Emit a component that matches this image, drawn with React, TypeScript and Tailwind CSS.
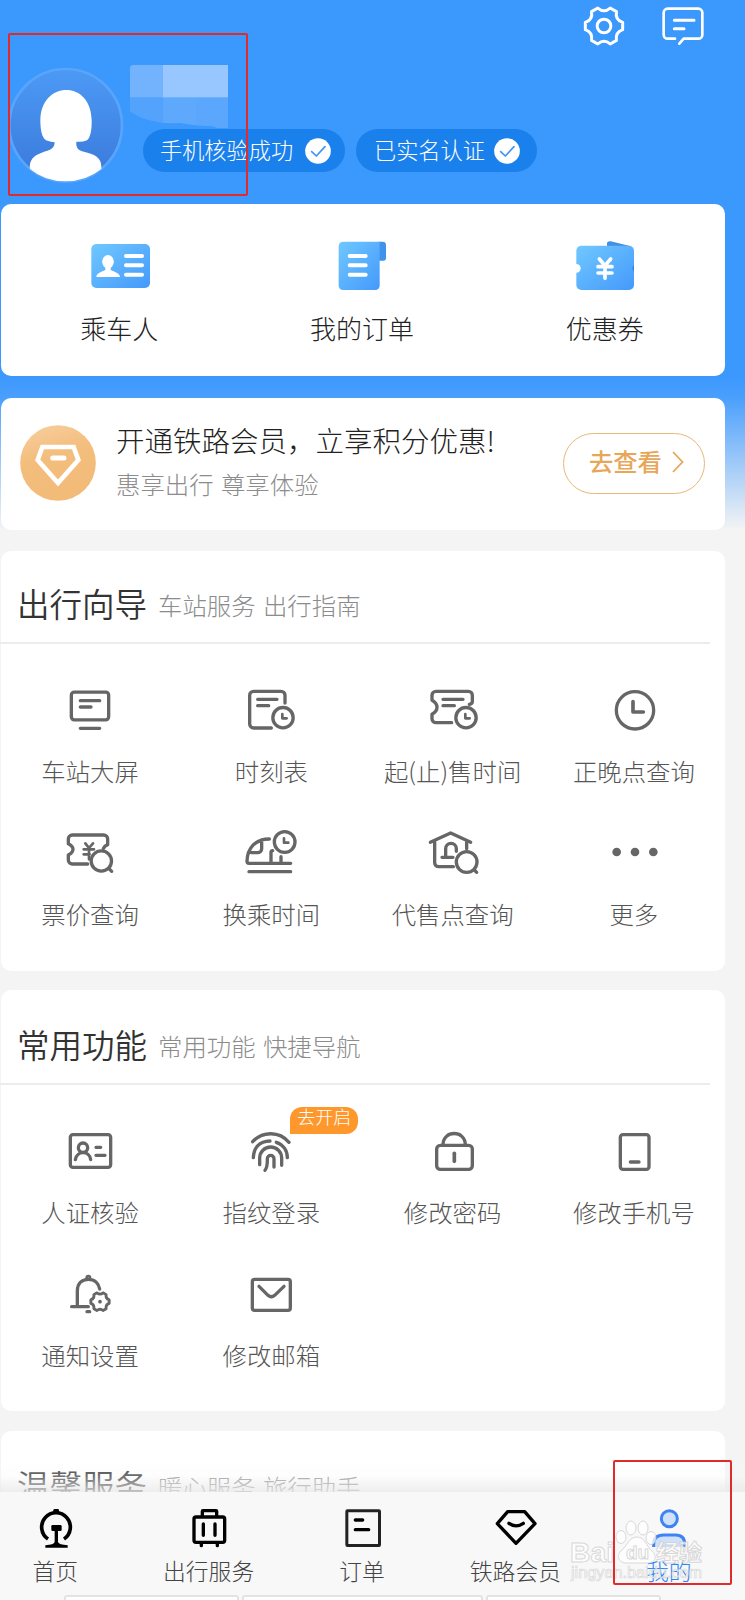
import type { ReactNode } from 'react';

interface MenuItem {
  label: string;
  icon: ReactNode;
  badge?: string;
}

// Six-lobed cog outline, rounded between the lobes
function cogPath(cx: number, cy: number, r: number, dip: number) {
  const at = (deg: number, radius: number) => {
    const a = (deg * Math.PI) / 180;
    return `${(cx + Math.cos(a) * radius).toFixed(1)} ${(cy + Math.sin(a) * radius).toFixed(1)}`;
  };
  let d = '';
  for (let i = 0; i < 6; i++) {
    const deg = i * 60;
    d += `${i === 0 ? 'M' : 'L'}${at(deg - 11, r)}L${at(deg + 11, r)}Q${at(deg + 30, dip)} ${at(deg + 49, r)}`;
  }
  return d + 'Z';
}

function LineIcon({ children }: { children: ReactNode }) {
  return (
    <svg
      className="w-[60px] h-12"
      viewBox="0 0 180 144"
      fill="none"
      stroke="#666"
      strokeWidth="10"
      strokeLinecap="round"
      strokeLinejoin="round"
    >
      {children}
    </svg>
  );
}

const guideItems: MenuItem[] = [
  {
    label: '车站大屏',
    icon: (
      <LineIcon>
        <rect x="31" y="21.5" width="112" height="83" rx="9" />
        <path d="M58 47H116M58 66H90M58 130H116" />
      </LineIcon>
    ),
  },
  {
    label: '时刻表',
    icon: (
      <LineIcon>
        <path d="M129 54V31a12 12 0 0 0-12-12H35a12 12 0 0 0-12 12v86a12 12 0 0 0 12 12h53" />
        <path d="M47 43H105M47 62H80" />
        <circle cx="123" cy="98" r="30.5" />
        <path d="M121 87V100H134" strokeWidth="8" />
      </LineIcon>
    ),
  },
  {
    label: '起(止)售时间',
    icon: (
      <LineIcon>
        <path d="M139 58Q148 56 148 50V31a12 12 0 0 0-12-12H39a12 12 0 0 0-12 12V46Q42 54 42 67Q42 80 27 88V101a12 12 0 0 0 12 12H86" />
        <path d="M60 43H120M60 62H94" />
        <circle cx="129" cy="98" r="30.5" />
        <path d="M127 87V100H140" strokeWidth="8" />
      </LineIcon>
    ),
  },
  {
    label: '正晚点查询',
    icon: (
      <LineIcon>
        <circle cx="93" cy="76" r="56" />
        <path d="M87 50V81H118" strokeWidth="11" />
      </LineIcon>
    ),
  },
  {
    label: '票价查询',
    icon: (
      <LineIcon>
        <path d="M127 62Q130 54 140 50V33a12 12 0 0 0-12-12H34a12 12 0 0 0-12 12V47Q36 54 36 64Q36 74 22 81V96a12 12 0 0 0 12 12H80" />
        <path d="M73 46L84 60L96 46M68 64H99M68 79H86M84 60V94" strokeWidth="8" />
        <circle cx="121" cy="99" r="30.5" />
        <path d="M144 122L152 130" />
      </LineIcon>
    ),
  },
  {
    label: '换乘时间',
    icon: (
      <LineIcon>
        <path d="M82 33C40 33 16 60 15 100Q15 106 21 106H146M59 36V62a12 12 0 0 1-12 12H28M87 106V74q0-6 5-6M117 106V86M21 131H146" />
        <circle cx="128" cy="42" r="31" />
        <path d="M126 31V44H139" strokeWidth="8" />
      </LineIcon>
    ),
  },
  {
    label: '代售点查询',
    icon: (
      <LineIcon>
        <path d="M22 43L83 15L143 43M35 42V104a12 12 0 0 0 12 12H91M131 42V62" />
        <path d="M68 88V62a16 16 0 0 1 32 0V70M57 88H90" />
        <circle cx="131" cy="102" r="31" />
        <path d="M154 126L161 133" />
      </LineIcon>
    ),
  },
  {
    label: '更多',
    icon: (
      <LineIcon>
        <g fill="#666" stroke="none">
          <circle cx="38" cy="72" r="13" />
          <circle cx="93" cy="72" r="13" />
          <circle cx="148" cy="72" r="13" />
        </g>
      </LineIcon>
    ),
  },
];

const commonItems: MenuItem[] = [
  {
    label: '人证核验',
    icon: (
      <LineIcon>
        <rect x="28" y="26" width="121" height="98" rx="8" />
        <circle cx="66" cy="65" r="14" />
        <path d="M43 101C47 73 86 73 89 101M105 64H119M105 88H132" />
      </LineIcon>
    ),
  },
  {
    label: '指纹登录',
    badge: '去开启',
    icon: (
      <LineIcon>
        <path d="M32 47C62 15 112 15 141 49M34 95C35 65 52 46 84 45M103 49C124 56 136 74 136 95" />
        <path d="M53 116V96a33 33 0 0 1 66 0V118M69 133C77 123 76 110 76 98a10 10 0 0 1 20 0V123" />
      </LineIcon>
    ),
  },
  {
    label: '修改密码',
    icon: (
      <LineIcon>
        <rect x="41" y="58" width="107" height="72" rx="11" />
        <path d="M60 57C60 11 127 11 127 57" />
        <path d="M94 82V106" strokeWidth="11" />
      </LineIcon>
    ),
  },
  {
    label: '修改手机号',
    icon: (
      <LineIcon>
        <rect x="49" y="26" width="86" height="104" rx="8" />
        <path d="M79 108H105" />
      </LineIcon>
    ),
  },
  {
    label: '通知设置',
    icon: (
      <LineIcon>
        <path d="M49 110V66C49 44 62 31 82 31C102 31 113 44 116 60M32 113H82M78 128H86" />
        <circle cx="82" cy="26" r="4" />
        <path d={cogPath(117, 98, 28, 19)} strokeWidth="8.5" />
        <circle cx="117" cy="98" r="5.5" fill="#666" stroke="none" />
      </LineIcon>
    ),
  },
  {
    label: '修改邮箱',
    icon: (
      <LineIcon>
        <rect x="31" y="31" width="114" height="93" rx="7" />
        <path d="M51 52L78 79Q88 88 98 79L126 52" />
      </LineIcon>
    ),
  },
];

const tabs = [
  {
    label: '首页',
    icon: (
      <>
        <path d="M66 99A43 43 0 1 1 114 99" strokeWidth="11" strokeLinecap="butt" />
        <path d="M82 20V13Q82 9 86 9H95Q99 9 99 13V20Z" fill="#000" stroke="none" />
        <rect x="76" y="57" width="31" height="18" rx="4" fill="#000" stroke="none" />
        <path d="M86 74H96V108Q99 116 125 118V125H58V118Q84 116 86 108Z" fill="#000" stroke="none" />
      </>
    ),
  },
  {
    label: '出行服务',
    icon: (
      <>
        <path d="M70 29V16Q70 14 72 14H111Q113 14 113 16V29" />
        <rect x="45" y="33" width="92" height="76" rx="6" />
        <path d="M73 54V88M108 54V88M67 112V119M115 112V119" />
      </>
    ),
  },
  {
    label: '订单',
    icon: (
      <g stroke="#222">
        <rect x="44.5" y="14.5" width="98" height="104" rx="2" strokeWidth="9" />
        <path d="M70 42H92M70 71H110" stroke="#000" />
      </g>
    ),
  },
  {
    label: '铁路会员',
    icon: <path d="M65 17H116L147 53L90 112L34 53ZM69 52Q90 67 112 52" />,
  },
  {
    label: '我的',
    active: true,
    icon: (
      <g stroke="#3f83f3" fill="#cfe0fa" strokeWidth="9" strokeLinecap="butt">
        <circle cx="91" cy="38" r="24" />
        <path d="M44 123V114Q44 87 74 87H110Q137 87 137 114V123" />
      </g>
    ),
  },
];

function VerifiedPill({ text, className }: { text: string; className: string }) {
  return (
    <div className={`h-[43px] rounded-full bg-[#1a80ec] flex items-center justify-between ${className}`}>
      <span className="text-[22.2px] leading-none whitespace-nowrap text-white pb-[3px]">{text}</span>
      <svg className="w-[26px] h-[26px] shrink-0" viewBox="0 0 78 78">
        <circle cx="39" cy="39" r="38.5" fill="#fff" />
        <path d="M20 41L34 54L60 26" fill="none" stroke="#3d95f0" strokeWidth="5" strokeLinecap="round" strokeLinejoin="round" />
      </svg>
    </div>
  );
}

function Header() {
  return (
    <header className="h-[204px] pt-1">
      <div className="flex justify-end gap-[35px] pr-10 h-[61px]">
        <svg className="w-11 h-11" viewBox="0 0 132 132" fill="none" stroke="#fff" strokeWidth="9" strokeLinejoin="round">
          <path d={cogPath(66, 66, 57, 38)} />
          <circle cx="66" cy="66" r="20.5" />
        </svg>
        <svg className="w-11 h-11" viewBox="0 0 132 132" fill="none" stroke="#fff" strokeWidth="8" strokeLinecap="round" strokeLinejoin="round">
          <path d="M42 104H20a12 12 0 0 1-12-12V26a12 12 0 0 1 12-12H112a12 12 0 0 1 12 12V92a12 12 0 0 1-12 12H68L55 119" />
          <path d="M40 49H99M40 74H69" strokeWidth="9" />
        </svg>
      </div>
      <div className="flex pl-2">
        <svg className="w-[116px] h-[116px] mt-0.5 shrink-0" viewBox="0 0 348 348">
          <defs>
            <linearGradient id="avatar" x1="0" y1="0" x2="0" y2="1">
              <stop offset="0" stopColor="#4c9af5" />
              <stop offset="1" stopColor="#3a79da" />
            </linearGradient>
          </defs>
          <circle cx="173" cy="175" r="169" fill="url(#avatar)" stroke="#58a5fb" strokeWidth="8" />
          <path
            d="M175 69C215 69 250 100 251 160C252 190 246 215 237 220Q222 226 205 224Q202 246 222 253C262 262 280 272 280 300V306Q235 343 172 343Q110 343 66 306C62 270 90 260 122 250Q140 244 140 226Q130 226 114 220C102 212 97 190 97 160C98 100 135 69 175 69Z"
            fill="#fff"
          />
        </svg>
        <div className="ml-1.5">
          {/* Blurred-out user name */}
          <svg className="block w-[98px] h-16" viewBox="0 0 294 192">
            <clipPath id="name">
              <path d="M0 10Q0 0 10 0H294V189H262Q245 182 232 183Q200 183 150 174Q60 180 0 140Z" />
            </clipPath>
            <g clipPath="url(#name)">
              <rect width="98" height="98" fill="#73b2fd" />
              <rect x="98" width="196" height="98" fill="#97c7fe" />
              <rect y="98" width="98" height="94" fill="#53a2fc" />
              <rect x="98" y="98" width="100" height="94" fill="#5fa9fc" />
              <rect x="198" y="98" width="96" height="94" fill="#5aa7fd" />
            </g>
          </svg>
          <div className="flex gap-[11px] ml-[13px]">
            <VerifiedPill text="手机核验成功" className="w-[202px] pl-[17px] pr-3.5" />
            <VerifiedPill text="已实名认证" className="w-[181px] pl-[18px] pr-[17px]" />
          </div>
        </div>
      </div>
    </header>
  );
}

const quickLinks = [
  {
    label: '乘车人',
    icon: (
      <>
        <rect x="19" y="18" width="176" height="132" rx="15" fill="url(#sky)" />
        <ellipse cx="69" cy="71" rx="17.5" ry="20" fill="#fff" />
        <path d="M34 117C34 106 47 103 61 96V84H77V96C91 103 105 106 105 117Z" fill="#fff" />
        <path d="M123 54H171M123 82H171M123 110H171" stroke="#fff" strokeWidth="12" strokeLinecap="round" />
      </>
    ),
  },
  {
    label: '我的订单',
    icon: (
      <>
        <path d="M154 11H167Q177 11 177 21V60Q177 68 169 68H154Z" fill="#3f93ea" />
        <path d="M49 11H158V142Q158 156 144 156H49Q35 156 35 142V25Q35 11 49 11Z" fill="url(#sky)" />
        <path d="M68 54H116M68 82H116M68 110H116" stroke="#fff" strokeWidth="12" strokeLinecap="round" />
      </>
    ),
  },
  {
    label: '优惠券',
    icon: (
      <>
        <path d="M111 26V15Q113 8 122 10L180 24L186 34Z" fill="#3f90e6" />
        <rect x="19" y="23" width="173" height="133" rx="15" fill="url(#sky)" />
        <circle cx="19" cy="91" r="13" fill="#fff" />
        <path d="M192 81Q182 91 192 101Z" fill="#3585df" />
        <path d="M88 63L105 83L122 63M84 86H126M84 105H126M105 84V121" fill="none" stroke="#fff" strokeWidth="11" strokeLinecap="round" />
      </>
    ),
  },
];

function Section({ title, subtitle, className, items = [] }: {
  title: string;
  subtitle: string;
  className: string;
  items?: MenuItem[];
}) {
  return (
    <section className={`ml-px w-[724px] rounded-[10px] bg-white shrink-0 ${className}`}>
      <div className="flex items-center h-[93px] pt-3.5 pl-[17px] -ml-px w-[710px] border-b-2 border-[#e9edef]">
        <h2 className="text-[32.5px] leading-none font-[350] text-[#333]">{title}</h2>
        <p className="text-[24.4px] leading-none text-[#8c8c8c] ml-[11px] mt-1 [word-spacing:2px]">{subtitle}</p>
      </div>
      <div className="grid grid-cols-4 auto-rows-[143px] -ml-px w-[725px] pt-[41px]">
        {items.map((item) => (
          <div key={item.label} className="relative flex flex-col items-center">
            {item.icon}
            <span className="mt-[26px] -ml-px text-[24.4px] leading-none text-[#555] whitespace-nowrap">{item.label}</span>
            {item.badge && (
              <span className="absolute left-[109px] -top-[19px] w-[68px] h-[27px] rounded-[12px] rounded-bl-none bg-[#ff982c] text-white text-[18px] leading-[19px] text-center">
                {item.badge}
              </span>
            )}
          </div>
        ))}
      </div>
    </section>
  );
}

function Watermark() {
  return (
    <svg className="absolute left-[569px] top-[1518px] w-[140px] h-[68px]" viewBox="0 0 140 68">
      <g fill="#fff" fillOpacity="0.75" stroke="#ccc" strokeOpacity="0.75" strokeWidth="1">
        <ellipse cx="52" cy="19" rx="5" ry="6.5" />
        <ellipse cx="62" cy="10" rx="5" ry="7" />
        <ellipse cx="74" cy="10" rx="5" ry="7" />
        <ellipse cx="82" cy="20" rx="5" ry="6.5" />
        <path d="M68 19C60 19 58 28 52 33C46 39 51 46 59 45H77C86 46 89 39 83 33C77 28 76 19 68 19Z" />
        <text x="1" y="44" fontFamily="Liberation Sans" fontWeight="700" fontSize="28" textLength="44" lengthAdjust="spacingAndGlyphs">Bai</text>
        <text x="57" y="41" fontFamily="Liberation Sans" fontWeight="700" fontSize="19">du</text>
        <text x="87" y="43" fontFamily="Noto Sans CJK SC" fontWeight="700" fontSize="23">经验</text>
        <text x="2" y="60" fontFamily="Liberation Sans" fontSize="16" textLength="131" lengthAdjust="spacingAndGlyphs" strokeWidth="0.7">jingyan.baidu.com</text>
      </g>
    </svg>
  );
}

export default function App() {
  return (
    <div className="relative w-[745px] h-[1600px] overflow-hidden flex flex-col bg-[#f4f4f4] font-light font-['Noto_Sans_CJK_SC',sans-serif]">
      <div className="h-[551px] shrink-0 bg-[linear-gradient(to_bottom,#3b98fd_376px,#4a9ffd_397px,#f4f4f4_530px)]">
        <Header />

        <section className="ml-px w-[724px] h-[172px] rounded-[10px] bg-white">
          <svg className="absolute w-0 h-0">
            <linearGradient id="sky" x1="0" y1="0" x2="1" y2="1">
              <stop offset="0" stopColor="#70c8ff" />
              <stop offset="1" stopColor="#4499fb" />
            </linearGradient>
          </svg>
          <div className="grid grid-cols-3 w-[728px] -ml-[3px] pt-[34px]">
            {quickLinks.map((link) => (
              <div key={link.label} className="flex flex-col items-center">
                <svg className="w-[70px] h-14 ml-px" viewBox="0 0 210 168">{link.icon}</svg>
                <span className="mt-[21px] text-[26px] leading-none text-[#222]">{link.label}</span>
              </div>
            ))}
          </div>
        </section>

        <section className="ml-px mt-[21.5px] w-[724px] h-[132px] rounded-[10px] bg-white flex items-center pl-[19px] pr-5 pb-px">
          <svg className="w-[76px] h-[76px]" viewBox="0 0 228 228" fill="none" stroke="#fff" strokeWidth="14">
            <linearGradient id="gold" x1="0" y1="0" x2="0.3" y2="1">
              <stop offset="0" stopColor="#f8cfa0" />
              <stop offset="0.5" stopColor="#f3bd7c" />
              <stop offset="1" stopColor="#f2bb78" />
            </linearGradient>
            <circle cx="114" cy="114" r="113.5" fill="url(#gold)" stroke="none" />
            <path d="M67 66H161L175 105L114 174L53 105Z" />
            <path d="M98 99H132" strokeWidth="15" strokeLinecap="round" />
          </svg>
          <div className="ml-5 flex-1 whitespace-nowrap pb-1">
            <p className="text-[28.5px] leading-none text-[#222]">开通铁路会员，立享积分优惠!</p>
            <p className="text-[24.4px] leading-none text-[#8c8c8c] mt-[17px] [word-spacing:2px]">惠享出行 尊享体验</p>
          </div>
          <button className="w-[142px] h-[61px] rounded-full border-[1.5px] border-[#e9b878] flex items-center pl-[25px] text-[#e8a659]">
            <span className="text-[24.3px] leading-none font-medium pb-1">去查看</span>
            <svg className="ml-[10px] mb-0.5 w-3 h-[22px]" viewBox="0 0 12 22" fill="none" stroke="currentColor" strokeWidth="1.8">
              <path d="M1 1L10.5 11L1 21" />
            </svg>
          </button>
        </section>
      </div>

      <Section title="出行向导" subtitle="车站服务 出行指南" items={guideItems} className="h-[419.5px]" />
      <Section title="常用功能" subtitle="常用功能 快捷导航" items={commonItems} className="h-[421.5px] mt-[19px] pt-[2.5px]" />
      <Section title="温馨服务" subtitle="暖心服务 旅行助手" className="h-[200px] mt-[19.5px] pt-[2px]" />

      {/* Bottom tab bar with a soft fade above it */}
      <nav className="absolute left-0 right-0 bottom-0 h-[108px] bg-[#f8f8f8]">
        <div className="absolute -top-8 left-0 right-0 h-8 bg-linear-to-b from-white/0 via-[#f8f8f8]/30 to-[#e9e9e9]/80" />
        <div className="grid grid-cols-5 w-[767px] -ml-[21px] pt-3.5">
          {tabs.map((tab) => (
            <div key={tab.label} className="flex flex-col items-center">
              <svg
                className="w-[60px] h-11"
                viewBox="0 0 180 132"
                fill="none"
                stroke="#000"
                strokeWidth="10"
                strokeLinecap="round"
                strokeLinejoin="round"
              >
                {tab.icon}
              </svg>
              <span className={`mt-[10px] text-[22.8px] leading-none -ml-px ${tab.active ? 'text-[#2f87f5]' : 'text-[#444]'}`}>
                {tab.label}
              </span>
            </div>
          ))}
        </div>
        <div className="absolute left-16 top-[103px] flex gap-[3px]">
          <div className="w-[175px] h-3 rounded-t-[3px] border-2 border-[#e3e3e3] bg-white" />
          <div className="w-[241px] h-3 rounded-t-[3px] border-2 border-[#e3e3e3] bg-white" />
          <div className="w-[175px] h-3 rounded-t-[3px] border-2 border-[#e3e3e3] bg-white" />
        </div>
      </nav>

      <Watermark />
      <div className="absolute left-2 top-[33px] w-[240px] h-[163px] border-2 border-[#e02a2c] rounded-xs" />
      <div className="absolute left-[613px] top-[1460px] w-[119px] h-[125px] border-2 border-[#e02a2c] rounded-xs" />
    </div>
  );
}
